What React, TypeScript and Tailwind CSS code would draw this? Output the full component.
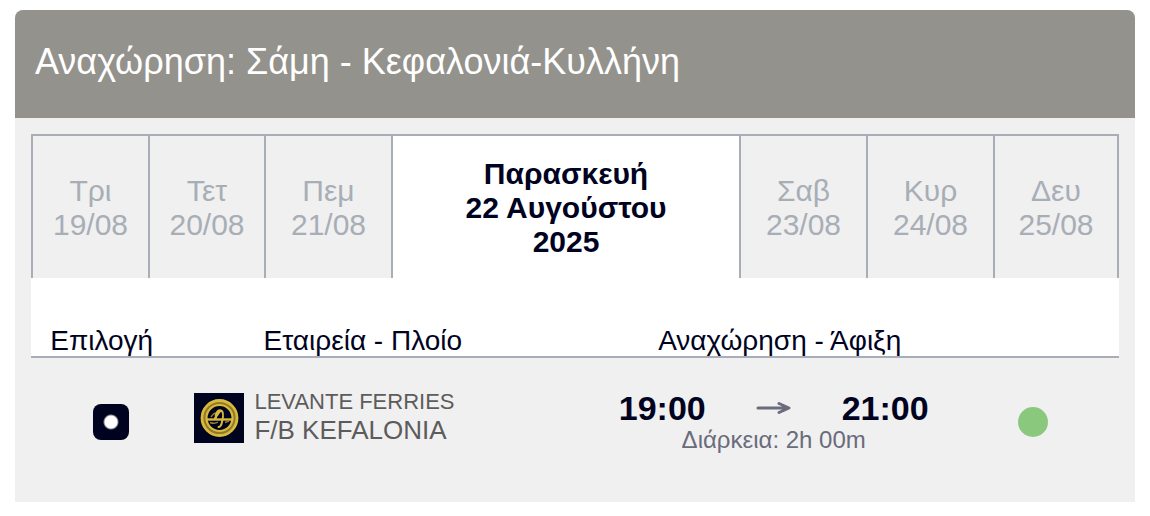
const days = [
  { name: "Τρι", date: "19/08" },
  { name: "Τετ", date: "20/08" },
  { name: "Πεμ", date: "21/08" },
  { name: "Παρασκευή", date: "22 Αυγούστου 2025", active: true },
  { name: "Σαβ", date: "23/08" },
  { name: "Κυρ", date: "24/08" },
  { name: "Δευ", date: "25/08" },
];

const DayTab = ({
  name,
  date,
  active,
}: {
  name: string;
  date: string;
  active?: boolean;
}) => {
  return (
    <button
      type="button"
      role="tab"
      aria-selected={!!active}
      className={
        active
          ? "border-l-2 border-[#a8adb7] bg-white px-12 pt-[2px] text-[30px] leading-[34px] font-bold text-[#00031f]"
          : "border-l-2 border-[#a8adb7] pt-[2px] text-[30px] leading-[34px] text-[#a8aeb6]"
      }
    >
      <span className="block">{name}</span>
      <span className="block">{date}</span>
    </button>
  );
};

const CompanyLogo = () => {
  return (
    <svg viewBox="0 0 50 50" className="size-[50px] shrink-0" aria-hidden="true">
      <rect width="50" height="50" fill="#00031f" />
      <g fill="none" stroke="#d9b93c">
        <circle cx="25.500" cy="25" r="15.500" strokeWidth="5" stroke="#8f7a2c" />
        <circle cx="25.500" cy="25" r="17.500" strokeWidth="2.800" />
        <circle cx="25.500" cy="25" r="13" strokeWidth="2.200" />
        <path d="M12 26.500H39" strokeWidth="2.400" />
        <path d="M17 24C19 21 20 20 22 20" strokeWidth="1.400" stroke="#94802f" />
        <path
          d="M22 25C21 20 24 16.500 27 17.500C30 18.500 29 25 28 29C27.500 32 26 34.500 24.500 34M27 17.500C24 20 23 23 21 25"
          strokeWidth="2"
          strokeLinecap="round"
        />
        <path d="M16 29.500C20 31 22 30.500 24 29M31 29.500L35 28" strokeWidth="1.400" stroke="#94802f" />
      </g>
    </svg>
  );
};

const Arrow = () => {
  return (
    <svg viewBox="0 0 36 14" className="h-[14px] w-9" aria-hidden="true">
      <path
        d="M2 7H31M23 2.500L33 7L23 11.500"
        fill="none"
        stroke="#6a6b7b"
        strokeWidth="3"
        strokeLinecap="round"
        strokeLinejoin="round"
      />
    </svg>
  );
};

export default function App() {
  return (
    <main className="px-[15px] pt-[10px] font-['Liberation_Sans',Arial,sans-serif]">
      <section className="overflow-hidden rounded-t-lg bg-[#f0f0f0]">
        <header className="bg-[#94928c] px-5 pt-[30px] pb-[34px]">
          <h1 className="text-[36px] leading-[44px] text-white">
            Αναχώρηση: Σάμη - Κεφαλονιά-Κυλλήνη
          </h1>
        </header>
        <div className="p-4">
          <div
            role="tablist"
            className="grid h-36 grid-cols-[117fr_116fr_127fr_348fr_127fr_127fr_124fr] border-t-2 border-r-2 border-[#a8adb7]"
          >
            {days.map((day) => (
              <DayTab key={day.date} {...day} />
            ))}
          </div>
          <table className="w-full table-fixed border-collapse">
            <thead>
              <tr className="h-[79px] border-b-2 border-[#a8adb7] bg-white text-[28px] leading-[31px] text-[#00031f]">
                <th className="w-[13%] p-0 align-bottom font-normal">Επιλογή</th>
                <th className="w-[35%] p-0 align-bottom font-normal">Εταιρεία - Πλοίο</th>
                <th className="w-[42%] p-0 pr-1 align-bottom font-normal">Αναχώρηση - Άφιξη</th>
                <th className="w-[10%] p-0" aria-label="Διαθεσιμότητα" />
              </tr>
            </thead>
            <tbody>
              <tr className="h-[129px]">
                <td className="p-0 pl-[62px]">
                  <input
                    type="radio"
                    name="trip"
                    defaultChecked
                    aria-label="LEVANTE FERRIES F/B KEFALONIA"
                    className="block size-9 appearance-none rounded-lg bg-[#00031f] bg-[radial-gradient(circle,white_6px,transparent_8px)]"
                  />
                </td>
                <td className="p-0 pb-2 pl-[22px]">
                  <div className="flex items-center gap-[10px] text-[#5c5c5c]">
                    <CompanyLogo />
                    <div className="pb-1">
                      <p className="text-[22px] leading-7">LEVANTE FERRIES</p>
                      <p className="text-[26px] leading-7">F/B KEFALONIA</p>
                    </div>
                  </div>
                </td>
                <td className="p-0 pr-4 text-center">
                  <div className="flex items-center justify-center gap-[50px] text-[34px] leading-9 font-bold text-[#00031f]">
                    <time>19:00</time>
                    <Arrow />
                    <time>21:00</time>
                  </div>
                  <p className="text-[24px] leading-7 text-[#6a6b7b]">Διάρκεια: 2h 00m</p>
                </td>
                <td className="p-0 pl-2">
                  <span className="block size-[30px] rounded-full bg-[#8ac87e]" />
                </td>
              </tr>
            </tbody>
          </table>
        </div>
      </section>
    </main>
  );
}
